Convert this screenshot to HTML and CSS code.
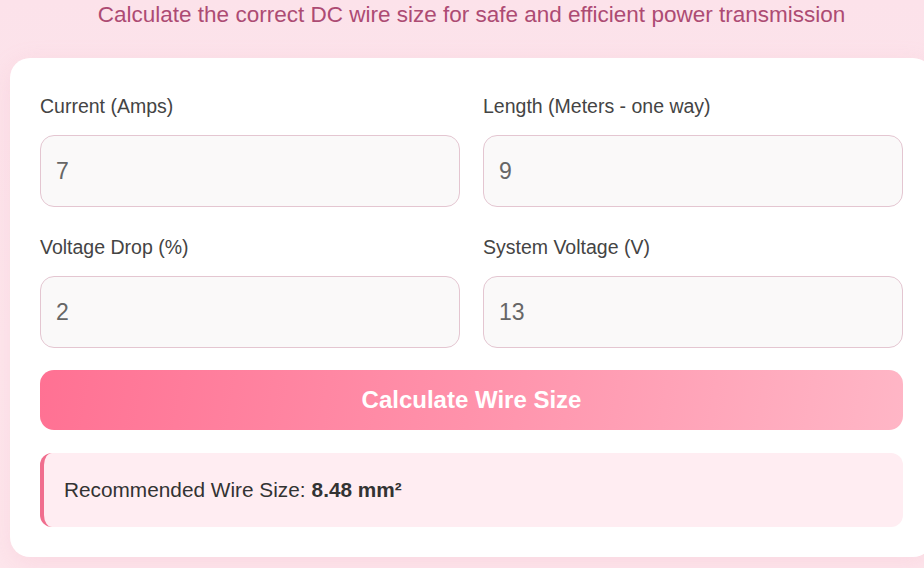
FILE: index.html
```html
<!DOCTYPE html>
<html lang="en">
<head>
<meta charset="utf-8">
<title>DC Wire Size Calculator</title>
<link rel="stylesheet" href="styles.css">
</head>
<body>
  <div class="page">
    <p class="subtitle">Calculate the correct DC wire size for safe and efficient power transmission</p>
    <main class="card">
      <div class="fields">
        <div class="field">
          <label class="field-label" for="current">Current (Amps)</label>
          <input class="field-input" id="current" type="text" value="7">
        </div>
        <div class="field">
          <label class="field-label" for="length">Length (Meters - one way)</label>
          <input class="field-input" id="length" type="text" value="9">
        </div>
        <div class="field">
          <label class="field-label" for="drop">Voltage Drop (%)</label>
          <input class="field-input" id="drop" type="text" value="2">
        </div>
        <div class="field">
          <label class="field-label" for="voltage">System Voltage (V)</label>
          <input class="field-input" id="voltage" type="text" value="13">
        </div>
      </div>
      <button class="calc-btn" type="button">Calculate Wire Size</button>
      <div class="result">Recommended Wire Size: <strong>8.48 mm²</strong></div>
    </main>
  </div>
</body>
</html>
```
FILE: styles.css
```css
html, body {
  margin: 0;
  padding: 0;
  overflow: hidden;
}

body {
  width: 924px;
  height: 568px;
  font-family: "Liberation Sans", Arial, sans-serif;
  background: linear-gradient(180deg, #fce2ea 0%, #fde7ed 60%, #fde6ec 100%);
  color: #333;
}

/* content column, wider than the viewport on the right */
.page {
  margin-left: 10px;
  width: 923px;
}

.subtitle {
  margin: 0;
  padding-top: 2px;
  height: 56px;
  text-align: center;
  font-size: 22.5px;
  line-height: 26px;
  color: #ad4b73;
}

.card {
  display: block;
  box-sizing: border-box;
  padding: 37px 30px 30px 30px;
  background: #ffffff;
  border-radius: 20px;
  box-shadow: 0 6px 24px rgba(240, 150, 180, 0.18);
}

.fields {
  display: grid;
  grid-template-columns: 420px 420px;
  column-gap: 23px;
  row-gap: 29px;
}

.field {
  display: flex;
  flex-direction: column;
}

.field-label {
  font-size: 19.5px;
  line-height: 23px;
  color: #444;
  margin-bottom: 17px;
}

.field-input {
  height: 72px;
  box-sizing: border-box;
  padding: 0 15px;
  border: 1px solid #e4c6d1;
  border-radius: 14px;
  background: #faf9f9;
  font-family: "Liberation Sans", Arial, sans-serif;
  font-size: 23px;
  color: #666;
  outline: none;
}

.calc-btn {
  display: block;
  width: 863px;
  height: 60px;
  margin-top: 22px;
  border: none;
  border-radius: 14px;
  background: linear-gradient(100deg, #ff7193 0%, #ff92ab 50%, #ffb6c6 100%);
  color: #fff;
  font-family: "Liberation Sans", Arial, sans-serif;
  font-size: 24px;
  font-weight: bold;
  cursor: pointer;
}

.result {
  margin-top: 23px;
  height: 74px;
  box-sizing: border-box;
  display: flex;
  align-items: center;
  gap: 6px;
  padding-left: 20px;
  border-left: 4px solid #f06e8e;
  border-radius: 12px;
  background: #ffedf2;
  font-size: 20.8px;
  color: #333;
}

.result strong {
  color: #333;
}
```
